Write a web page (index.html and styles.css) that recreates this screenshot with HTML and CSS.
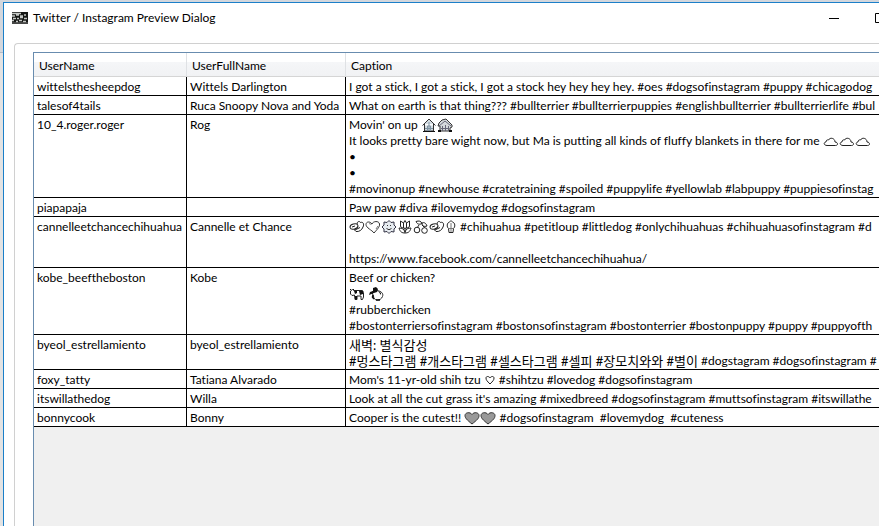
FILE: index.html
```html
<!DOCTYPE html>
<html lang="en">
<head>
<meta charset="utf-8">
<title>Twitter / Instagram Preview Dialog</title>
<link rel="stylesheet" href="styles.css">
</head>
<body>
<svg class="sprite" aria-hidden="true">
  <symbol id="house" viewBox="0 0 16 16"><path d="M1.500 8.500L8 2l6.500 6.500M3.500 7v7h9V7" fill="#d5dde3" stroke="#333"/><path d="M6.500 14V9h3v5M4 11.500h8M8 5v9" fill="none" stroke="#8296a5"/><path d="M2 14.500h12" stroke="#111"/></symbol>
  <symbol id="garden" viewBox="0 0 16 16"><path d="M1 9l1-3 3-3 4-1 6 6v2l-2 1v3H3V9z" fill="#d5d9dc" stroke="#333"/><path d="M2 9l6-5 6 5M5.500 9v5M8.500 8v6M11.500 9v5M4 11.500h8" fill="none" stroke="#667"/><path d="M1 14h3M12 14h3" stroke="#111" stroke-width="2"/></symbol>
  <symbol id="cloud" viewBox="0 0 16 16"><path d="M4 12.500h8.500c3 0 2.500-3.500-.5-3.500 0-4-5-5-6.500-2-1.500-.5-2.500.5-2.500 2C0 9.500 1 12.500 4 12.500z" fill="#fff" stroke="#222"/></symbol>
  <symbol id="ring" viewBox="0 0 16 16"><path d="M8 5c0-3 3-3 3.500-1.500C14 2.500 15.500 5 14 8c-1 3-4 5-7 4.500L5.500 11z" fill="#fff" stroke="#222"/><ellipse cx="5" cy="7.500" rx="4" ry="2.500" transform="rotate(-15 5 7.500)" fill="#fff" stroke="#222"/><path d="M3 8l3-1M6 11l5-2.500" fill="none" stroke="#222"/></symbol>
  <symbol id="heart" viewBox="0 0 16 16"><path d="M9 14C7 11 1 9 1 5.500 1 2.500 5 2 7 5c1-3 7-3.500 7.500 0 .5 3-3 6-5.500 9z" fill="#fff" stroke="#333"/><path d="M4 5c1-1 2 0 2 1M11 10l2-3" fill="none" stroke="#777"/></symbol>
  <symbol id="flower" viewBox="0 0 16 16"><path d="M8 1.500l2 2 3-.5v3l2 2-2 2v3l-3-.5-2 2-2-2-3 .5v-3l-2-2 2-2V3l3 .5z" fill="#e6ebf0" stroke="#334"/><path d="M6 6.500h1m2 0h1M5.500 9.500Q8 12 10.500 9.500" fill="none" stroke="#333"/></symbol>
  <symbol id="tulip" viewBox="0 0 16 16"><path d="M3.500 2l3 2L8 1.500 9.500 4l3-2v5c0 3-9 3-9 0zM6.500 4v5m3-5v5M8 9v5M2 9c1 4 3 5 6 5s5-1 6-5c-3 0-5 1-6 4-1-3-3-4-6-4z" fill="#fff" stroke="#222"/></symbol>
  <symbol id="cherry" viewBox="0 0 16 16"><path d="M3 2.500c3-1 5-.5 6 2-3 1.500-5 .5-6-2zM9 4c2-1 4 0 5 3-3 1-5 0-5-3zM6 6L4 9M9 6l3 3" fill="#fff" stroke="#222"/><circle cx="4" cy="11" r="2.800" fill="#fff" stroke="#222"/><circle cx="11.500" cy="11.500" r="2.800" fill="#fff" stroke="#222"/></symbol>
  <symbol id="cone" viewBox="0 0 12 16"><path d="M3.500 9.500C1.500 8 2 3.500 4 3.500c1-2 3-2 4 0 2 0 2.500 4.500.5 6L8 13.500H4z" fill="#fff" stroke="#222"/><path d="M3.500 9.500h5M6 4v9" fill="none" stroke="#777"/></symbol>
  <symbol id="cow" viewBox="0 0 16 16"><path d="M1.500 5l2-1.500L5 4.500h8.500l1 2V11l-1 2.500H12V10H8v3.500H6L5.500 9 3 9.500 1.500 8z" fill="#fff" stroke="#222"/><path d="M5 5h3v2L6 8zm5 0h4v3l-3 1zM6 10h2v3H6z" fill="#111"/><path d="M2 4L1 3m3 1l1-1" stroke="#111"/></symbol>
  <symbol id="chicken" viewBox="0 0 16 16"><path d="M4 6.500L6 4l5 1c3 1 4.500 3 3.500 5.500-1 2.500-3 3.500-5 3.500-3 0-4-2-4-4z" fill="#fff" stroke="#222"/><path d="M5 2l3-1 2 2-1 3-3 1-5 2 1-3 3-1zM10 5l3 2v2z" fill="#111"/><path d="M5 9l-.5 2L6 13M8 14h4" fill="none" stroke="#111" stroke-width="1.500"/></symbol>
  <symbol id="smallheart" viewBox="0 0 12 16"><path d="M6 12C3 9 2 8 2 6c0-2 3-2 4 0 1-2 4-2 4 0s-1 3-4 6z" fill="#fff" stroke="#222"/></symbol>
  <symbol id="grayheart" viewBox="0 0 16 16"><path d="M8 14C3 10 1 8 1 5.500c0-3 5-4 7-1 2-3 7-2 7 1S13 10 8 14z" fill="#999" stroke="#333"/></symbol>
</svg>
<main class="window">
  <header class="titlebar">
    <svg class="app-icon" viewBox="0 0 16 12" aria-hidden="true"><path d="M0 0h16v12H0z" fill="#161816"/><path d="M0 1.500h9M0 4h3m1-1h3m1 1h3m1-1h2M1 6.500h3m1 0h2m1-1h3m1 1h3M0 8.500h2m2 1h2m1-1h3m1 1h3" fill="none" stroke="#c5c8c5" stroke-width="1.500"/><path d="M0 11h16" stroke="#777"/></svg>
    <h1 class="title">Twitter / Instagram Preview Dialog</h1>
    <div class="controls">
      <button class="control" type="button" aria-label="Minimize"><svg viewBox="0 0 10 10"><path d="M0 5.500h10"/></svg></button>
      <button class="control" type="button" aria-label="Maximize"><svg viewBox="0 0 10 10"><path d="M.5.5h9v9h-9z"/></svg></button>
    </div>
  </header>
  <section class="group">
    <div class="list">
      <table class="grid">
        <colgroup><col class="col-user"><col class="col-name"><col></colgroup>
        <thead><tr><th>UserName</th><th>UserFullName</th><th>Caption</th></tr></thead>
        <tbody>
          <tr><td>wittelsthesheepdog</td><td>Wittels Darlington</td><td>I got a stick, I got a stick, I got a stock hey hey hey hey. #oes #dogsofinstagram #puppy #chicagodog</td></tr>
          <tr><td>talesof4tails</td><td>Ruca Snoopy Nova and Yoda</td><td>What on earth is that thing??? #bullterrier #bullterrierpuppies #englishbullterrier #bullterrierlife #bul</td></tr>
          <tr><td>10_4.roger.roger</td><td>Rog</td><td>Movin' on up <svg class="emoji"><use href="#house"/></svg><svg class="emoji"><use href="#garden"/></svg><br>It looks pretty bare wight now, but Ma is putting all kinds of fluffy blankets in there for me <svg class="emoji"><use href="#cloud"/></svg><svg class="emoji"><use href="#cloud"/></svg><svg class="emoji"><use href="#cloud"/></svg><br>•<br>•<br>#movinonup #newhouse #cratetraining #spoiled #puppylife #yellowlab #labpuppy #puppiesofinstag</td></tr>
          <tr><td>piapapaja</td><td></td><td>Paw paw #diva #ilovemydog #dogsofinstagram</td></tr>
          <tr><td>cannelleetchancechihuahua</td><td>Cannelle et Chance</td><td><svg class="emoji"><use href="#ring"/></svg><svg class="emoji"><use href="#heart"/></svg><svg class="emoji"><use href="#flower"/></svg><svg class="emoji"><use href="#tulip"/></svg><svg class="emoji"><use href="#cherry"/></svg><svg class="emoji"><use href="#ring"/></svg><svg class="emoji small"><use href="#cone"/></svg> #chihuahua #petitloup #littledog #onlychihuahuas #chihuahuasofinstagram #d<br><br>https://www.facebook.com/cannelleetchancechihuahua/</td></tr>
          <tr><td>kobe_beeftheboston</td><td>Kobe</td><td>Beef or chicken?<br><svg class="emoji"><use href="#cow"/></svg> <svg class="emoji"><use href="#chicken"/></svg><br>#rubberchicken<br>#bostonterriersofinstagram #bostonsofinstagram #bostonterrier #bostonpuppy #puppy #puppyofth</td></tr>
          <tr><td>byeol_estrellamiento</td><td>byeol_estrellamiento</td><td><span class="hangul" lang="ko">새벽: 별식감성<br>#멍스타그램 #개스타그램 #셀스타그램 #셀피 #장모치와와 #별이</span> #dogstagram #dogsofinstagram #</td></tr>
          <tr><td>foxy_tatty</td><td>Tatiana Alvarado</td><td>Mom's 11-yr-old shih tzu <svg class="emoji small"><use href="#smallheart"/></svg> #shihtzu #lovedog #dogsofinstagram</td></tr>
          <tr><td>itswillathedog</td><td>Willa</td><td>Look at all the cut grass it's amazing #mixedbreed #dogsofinstagram #muttsofinstagram #itswillathe</td></tr>
          <tr><td>bonnycook</td><td>Bonny</td><td>Cooper is the cutest!! <svg class="emoji"><use href="#grayheart"/></svg><svg class="emoji"><use href="#grayheart"/></svg> #dogsofinstagram&nbsp; #lovemydog&nbsp; #cuteness</td></tr>
        </tbody>
      </table>
    </div>
  </section>
</main>
</body>
</html>
```
FILE: styles.css
```css
* { box-sizing: border-box; }
body {
  margin: 0;
  height: 100vh;
  padding: 2px 0 0 3px;
  overflow: hidden;
  background: linear-gradient(#d3d7dd, #d3d7dd 52px, #b4bac6 52px, #b4bac6 53px, #e3e3e3 53px);
  color: #000;
  font: 12px/16px Lato, "Noto Sans CJK KR", sans-serif;
  font-variant-ligatures: none;
}
.sprite { display: none; }
.window {
  display: flex;
  flex-direction: column;
  height: 100%;
  background: #fff;
  border: solid #1b7fc9;
  border-width: 1px 0 0 1px;
}
.titlebar {
  display: flex;
  flex: none;
  align-items: center;
  height: 30px;
  padding-left: 8px;
  overflow: hidden;
}
.app-icon { width: 16px; height: 12px; margin-right: 5px; }
.title { flex: 1; margin: 0; font-size: 12px; font-weight: 400; white-space: nowrap; }
.controls { display: flex; margin-right: -24px; }
.control {
  display: flex;
  align-items: center;
  justify-content: center;
  width: 46px;
  height: 30px;
  padding: 0;
  border: 0;
  background: none;
}
.control svg { width: 10px; height: 10px; fill: none; stroke: #000; }
.group {
  display: flex;
  flex: 1;
  min-height: 0;
  margin: 10px 0 0 10px;
  padding: 8px 0 0 18px;
  border: solid #d0d0d0;
  border-width: 1px 0 0 1px;
  border-top-left-radius: 4px;
}
.list {
  flex: 1;
  min-width: 0;
  overflow: hidden;
  background: #f0f0f0;
  border: solid #688caf;
  border-width: 1px 0 0 1px;
}
.grid {
  width: 100%;
  table-layout: fixed;
  border-collapse: separate;
  border-spacing: 0;
}
.col-user { width: 153px; }
.col-name { width: 159px; }
.grid th, .grid td {
  overflow: hidden;
  white-space: nowrap;
  text-align: left;
  vertical-align: top;
}
.grid th {
  height: 24px;
  padding: 5px 0 2px 5px;
  font-weight: 400;
  border-bottom: 1px solid #d5d5d5;
  border-right: 1px solid #dfe1e4;
  background: linear-gradient(#fff 40%, #f5f6f8 40%, #f1f2f4);
}
.grid td {
  padding: 2px 0 0 3px;
  background: #fff;
  border-bottom: 1px solid #000;
  border-right: 1px solid #000;
}
.grid th:last-child, .grid td:last-child { border-right: 0; }
.hangul { font-size: 13px; line-height: 16px; vertical-align: top; }
.emoji { width: 16px; height: 16px; vertical-align: top; }
.small { width: 12px; }
```
